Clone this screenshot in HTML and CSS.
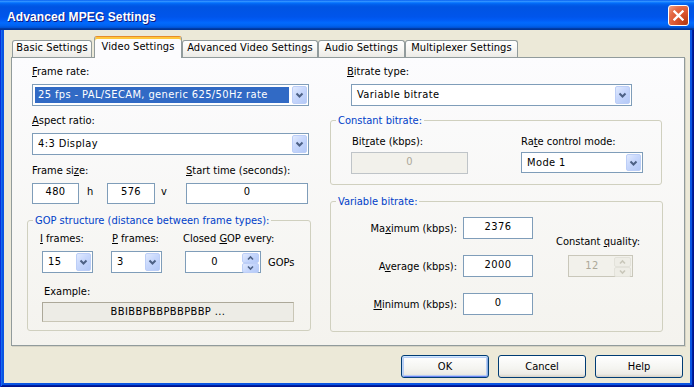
FILE: index.html
```html
<!DOCTYPE html>
<html>
<head>
<meta charset="utf-8">
<title>Advanced MPEG Settings</title>
<link rel="stylesheet" href="styles.css">
</head>
<body>
<div class="window">
  <div class="titlebar">
    <span class="title">Advanced MPEG Settings</span>
    <span class="close"><svg width="11" height="11" viewBox="0 0 11 11"><path d="M1.5 1.5 L9.5 9.5 M9.5 1.5 L1.5 9.5"/></svg></span>
  </div>
  <div class="client">
    <div class="tabs">
      <div class="tab tab-basic">Basic Settings</div>
      <div class="tab tab-video active">Video Settings</div>
      <div class="tab tab-adv">Advanced Video Settings</div>
      <div class="tab tab-audio">Audio Settings</div>
      <div class="tab tab-mux">Multiplexer Settings</div>
    </div>
    <div class="panel">
      <div class="col col-left">
        <div class="lbl ind"><u>F</u>rame rate:</div>
        <div class="combo ind w-full gap6"><span class="val sel">25 fps - PAL/SECAM, generic 625/50Hz rate</span><span class="dd"><svg width="15" height="18" viewBox="0 0 15 18"><path d="M4.5 7.5 L7.5 10.5 L10.5 7.5"/></svg></span></div>
        <div class="lbl ind gap8"><u>A</u>spect ratio:</div>
        <div class="combo ind w-full gap6"><span class="val">4:3 Display</span><span class="dd"><svg width="15" height="18" viewBox="0 0 15 18"><path d="M4.5 7.5 L7.5 10.5 L10.5 7.5"/></svg></span></div>
        <div class="size-grid">
          <div class="lbl span4">Frame si<u>z</u>e:</div>
          <div class="lbl"><u>S</u>tart time (seconds):</div>
          <div class="edit">480</div>
          <div class="unit unit-h">h</div>
          <div class="edit">576</div>
          <div class="unit unit-v">v</div>
          <div class="edit">0</div>
        </div>
        <fieldset class="group gop">
          <legend>GOP structure (distance between frame types):</legend>
          <div class="gop-body">
            <div class="gop-grid">
              <div class="lbl"><u>I</u> frames:</div>
              <div class="lbl lbl-p"><u>P</u> frames:</div>
              <div class="lbl">Closed <u>G</u>OP every:</div>
              <div class="combo w-small ml2"><span class="val">15</span><span class="dd"><svg width="15" height="18" viewBox="0 0 15 18"><path d="M4.5 7.5 L7.5 10.5 L10.5 7.5"/></svg></span></div>
              <div class="combo w-small"><span class="val">3</span><span class="dd"><svg width="15" height="18" viewBox="0 0 15 18"><path d="M4.5 7.5 L7.5 10.5 L10.5 7.5"/></svg></span></div>
              <div class="spin-row">
                <div class="spin w-gop"><span class="sv">0</span><span class="sb"><span class="sbtn"><svg width="15" height="8" viewBox="0 0 15 8"><path d="M5 5.5 L7.5 3 L10 5.5"/></svg></span><span class="sbtn"><svg width="15" height="8" viewBox="0 0 15 8"><path d="M5 2.5 L7.5 5 L10 2.5"/></svg></span></span></div>
                <span class="gops">GOPs</span>
              </div>
            </div>
            <div class="lbl example-lbl">Example:</div>
            <div class="example">BBIBBPBBPBBPBBP ...</div>
          </div>
        </fieldset>
      </div>
      <div class="col col-right">
        <div class="lbl bt-lbl"><u>B</u>itrate type:</div>
        <div class="combo w-bt gap6"><span class="val">Variable bitrate</span><span class="dd"><svg width="15" height="18" viewBox="0 0 15 18"><path d="M4.5 7.5 L7.5 10.5 L10.5 7.5"/></svg></span></div>
        <fieldset class="group cbr">
          <legend>Constant bitrate:</legend>
          <div class="cbr-grid">
            <div class="lbl lbl-br">Bit<u>r</u>ate (kbps):</div>
            <div class="lbl">Ra<u>t</u>e control mode:</div>
            <div class="edit disabled w-br">0</div>
            <div class="combo w-mode"><span class="val">Mode 1</span><span class="dd"><svg width="15" height="18" viewBox="0 0 15 18"><path d="M4.5 7.5 L7.5 10.5 L10.5 7.5"/></svg></span></div>
          </div>
        </fieldset>
        <fieldset class="group vbr">
          <legend>Variable bitrate:</legend>
          <div class="vbr-grid">
            <div class="rlbl">Ma<u>x</u>imum (kbps):</div>
            <div class="edit tall">2376</div>
            <div class="cq">
              <div class="lbl">Constant <u>q</u>uality:</div>
              <div class="spin disabled w-cq"><span class="sv">12</span><span class="sb"><span class="sbtn"><svg width="15" height="8" viewBox="0 0 15 8"><path d="M5 5.5 L7.5 3 L10 5.5"/></svg></span><span class="sbtn"><svg width="15" height="8" viewBox="0 0 15 8"><path d="M5 2.5 L7.5 5 L10 2.5"/></svg></span></span></div>
            </div>
            <div class="rlbl">A<u>v</u>erage (kbps):</div>
            <div class="edit tall">2000</div>
            <div class="rlbl"><u>M</u>inimum (kbps):</div>
            <div class="edit tall">0</div>
          </div>
        </fieldset>
      </div>
    </div>
    <div class="buttons">
      <button class="btn default">OK</button>
      <button class="btn">Cancel</button>
      <button class="btn">Help</button>
    </div>
  </div>
</div>
</body>
</html>
```
FILE: styles.css
```css
* { box-sizing: border-box; }
html, body { margin: 0; padding: 0; }
body {
  width: 694px;
  height: 387px;
  overflow: hidden;
  background: #fff;
  font-family: "DejaVu Sans Condensed", "DejaVu Sans", sans-serif;
  font-stretch: condensed;
  font-size: 11px;
  line-height: 13px;
  color: #000;
}
u { text-decoration: underline; text-underline-offset: 1px; }

.window {
  width: 694px;
  height: 387px;
  display: flex;
  flex-direction: column;
  background: #0A55E3;
  box-shadow: inset 1px 0 0 #0831D9, inset -1px -1px 0 #00138C, inset 2px 0 0 #166AEE, inset -2px -2px 0 #001EA0;
}

.titlebar {
  height: 30px;
  flex: none;
  display: flex;
  align-items: center;
  justify-content: space-between;
  padding: 0 5px 0 7px;
  background: linear-gradient(to bottom, #0058EE 0%, #3593FF 4%, #288EFF 6%, #127DFF 8%, #036FFC 10%, #0262EE 14%, #0057E5 20%, #0054E3 24%, #0055EB 56%, #005BF5 66%, #026AFE 76%, #0062EF 86%, #0052D6 92%, #0040AB 94%, #003092 100%);
}
.title {
  color: #fff;
  font-family: "Liberation Sans", sans-serif;
  font-stretch: normal;
  font-weight: bold;
  font-size: 12px;
  line-height: 14px;
  padding-top: 3px;
  letter-spacing: 0.1px;
  text-shadow: 1px 1px 0 #0A1883;
}
.close {
  width: 21px;
  height: 21px;
  border: 1px solid #fff;
  border-radius: 3px;
  display: flex;
  align-items: center;
  justify-content: center;
  background: radial-gradient(circle at 90% 90%, #B53A12 0%, #D9522C 40%, #E46A45 70%, #F2A286 100%);
}
.close svg path { stroke: #fff; stroke-width: 2.3; fill: none; stroke-linecap: square; }

.client {
  flex: 1;
  margin: 0 4px 4px;
  background: #ECE9D8;
  padding: 6px 5px 0 7px;
  display: flex;
  flex-direction: column;
}

.tabs {
  display: flex;
  align-items: flex-end;
  height: 21px;
  padding-left: 1px;
}
.tab {
  height: 17px;
  border: 1px solid #919B9C;
  border-bottom: 0;
  border-radius: 3px 3px 0 0;
  background: linear-gradient(#FFFFFF, #F7F7F4 50%, #ECEBE6);
  padding: 0 0 3px;
  text-align: center;
  white-space: nowrap;
  letter-spacing: 0.1px;
}
.tab.active {
  position: relative;
  z-index: 1;
  height: 22px;
  margin-bottom: -1px;
  margin-left: 2px;
  padding-top: 3px;
  border-top: 1px solid #E68B2C;
  background: #FCFCFE;
  box-shadow: inset 0 2px 0 #FFC73C;
}
.tab-basic { width: 80px; }
.tab-video { width: 88px; }
.tab-adv { width: 136px; }
.tab-audio { width: 87px; }
.tab-mux { width: 113px; }

.panel {
  width: 674px;
  height: 289px;
  border: 1px solid #919B9C;
  background: linear-gradient(#FCFCFE, #F4F3EE);
  display: grid;
  grid-template-columns: 283px 332px;
  column-gap: 20px;
  align-content: start;
  padding: 7px 0 0 15px;
  box-shadow: 1px 1px 0 #D6D3C4;
}

.col { display: flex; flex-direction: column; align-items: flex-start; }

.lbl { height: 13px; white-space: nowrap; }
.ind { margin-left: 5px; }
.gap6 { margin-top: 6px; }
.gap8 { margin-top: 8px; }
.ml2 { margin-left: 2px; }

.combo {
  display: flex;
  height: 22px;
  border: 1px solid #7F9DB9;
  background: #fff;
  padding: 1px;
}
.combo .val {
  flex: 1;
  margin: 1px 3px 1px 1px;
  padding-left: 3px;
  line-height: 16px;
  white-space: nowrap;
  overflow: hidden;
  letter-spacing: 0.4px;
}
.combo .val.sel { background: #316AC5; color: #fff; }
.dd {
  width: 15px;
  flex: none;
  border-radius: 2px;
  border: 1px solid #BCCEF7;
  background: linear-gradient(135deg, #E1EAFE 0%, #C7D7FC 45%, #B4C9F7 100%);
  display: flex;
  align-items: center;
  justify-content: center;
}
.dd svg { flex: none; }
.dd svg path, .sbtn svg path { stroke: #4D6185; stroke-width: 2; fill: none; }

.w-full { width: 277px; }
.w-small { width: 51px; }
.w-bt { width: 281px; margin-left: 21px; }
.w-mode { width: 122px; height: 21px; }

.edit {
  height: 21px;
  border: 1px solid #7F9DB9;
  background: #fff;
  text-align: center;
  line-height: 15px;
  white-space: nowrap;
  letter-spacing: 0.4px;
}
.edit.tall { height: 22px; line-height: 17px; }
.edit.disabled {
  height: 22px;
  line-height: 17px;
  background: #F2F1EB;
  border-color: #BFC4C8;
  color: #ACA899;
}

.size-grid {
  margin-top: 9px;
  margin-left: 5px;
  display: grid;
  grid-template-columns: 47px 28px 48px 31px 122px;
  grid-template-rows: 13px 21px;
  row-gap: 6px;
}
.span4 { grid-column: 1 / 5; }
.unit { line-height: 15px; padding-top: 1px; }
.unit-h { padding-left: 8px; }
.unit-v { padding-left: 6px; }

.group {
  margin: 0;
  padding: 0;
  min-width: 0;
  border: 1px solid #D0D0BF;
  border-radius: 3px;
}
.group legend {
  margin-left: 5px;
  padding: 0 2px;
  color: #0040C8;
  line-height: 13px;
  white-space: nowrap;
}

.gop { width: 284px; margin-top: 10px; }
.gop-body { padding: 5px 0 8px 12px; }
.gop-grid {
  display: grid;
  grid-template-columns: 71px 72px auto;
  grid-template-rows: 13px 22px;
  row-gap: 6px;
  justify-items: start;
}
.lbl-p { padding-left: 1px; }
.spin-row { display: flex; align-items: center; margin-left: 2px; }
.gops { margin-left: 7px; }
.example-lbl { margin: 12px 0 0 4px; }
.example {
  margin: 4px 0 0 2px;
  width: 252px;
  height: 20px;
  border: 1px solid #C9C6B6;
  border-top-color: #ACA899;
  border-left-color: #ACA899;
  background: #EDECE6;
  text-align: center;
  line-height: 18px;
  letter-spacing: 0.4px;
}

.spin {
  display: flex;
  height: 22px;
  border: 1px solid #7F9DB9;
  background: #fff;
  padding: 1px;
}
.spin .sv { flex: 1; text-align: center; line-height: 17px; letter-spacing: 0.4px; }
.spin .sb { width: 17px; display: flex; flex-direction: column; }
.sbtn {
  flex: 1;
  display: flex;
  align-items: center;
  justify-content: center;
  border: 1px solid #BCCEF7;
  border-radius: 2px;
  background: linear-gradient(135deg, #E1EAFE 0%, #C7D7FC 45%, #B4C9F7 100%);
}
.sbtn svg path { stroke-width: 1.6; }
.w-gop { width: 76px; }
.w-cq { width: 65px; margin-left: 12px; }
.spin.disabled { border-color: #C9C7BA; background: #F2F1EB; color: #ACA899; }
.spin.disabled .sbtn { border-color: #E3E2DA; background: #EEEDE6; }
.spin.disabled .sbtn svg path { stroke: #C9C7BA; }

.col-right { align-items: flex-start; }
.bt-lbl { margin-left: 17px; }
.cbr { width: 332px; margin-top: 8px; }
.cbr-grid {
  display: grid;
  grid-template-columns: 170px auto;
  grid-template-rows: 13px 22px;
  row-gap: 4px;
  padding: 8px 0 10px 20px;
  justify-items: start;
  align-items: start;
}
.lbl-br { padding-left: 1px; }
.w-br { width: 117px; }

.vbr { width: 333px; margin-top: 10px; }
.vbr-grid {
  display: grid;
  grid-template-columns: 126px 70px 85px;
  grid-template-rows: 22px 22px 22px;
  column-gap: 6px;
  row-gap: 16px;
  padding: 9px 0 16px 0;
}
.rlbl { text-align: right; align-self: center; white-space: nowrap; }
.cq {
  grid-column: 3;
  grid-row: 1 / 3;
  margin-left: 17px;
  display: flex;
  flex-direction: column;
  justify-content: flex-end;
  gap: 7px;
}

.buttons {
  display: flex;
  justify-content: flex-end;
  gap: 9px;
  margin-top: 9px;
  padding-right: 2px;
}
.btn {
  width: 88px;
  height: 23px;
  margin: 0;
  padding: 0;
  border: 1px solid #003C74;
  border-radius: 3px;
  background: linear-gradient(#FFFFFF, #F4F4F0 60%, #ECEBE6 86%, #D6D0C5);
  font: inherit;
  font-stretch: condensed;
  line-height: 21px;
  color: #000;
}
.btn.default {
  box-shadow: inset 0 1px 0 #CEE7FF, inset 1px 0 0 #BCD4F6, inset -1px 0 0 #89ADE4, inset 0 -1px 0 #6982EE, inset 0 0 0 2px #B7CDF5;
}
```
